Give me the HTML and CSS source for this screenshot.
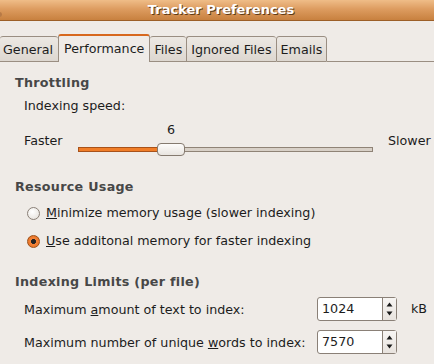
FILE: index.html
```html
<!DOCTYPE html>
<html lang="en">
<head>
<meta charset="utf-8"/>
<title>Tracker Preferences</title>
<link rel="stylesheet" href="styles.css">
</head>
<body>
<div class="window">
  <div class="titlebar">
    <span class="corner"></span>
    <span class="title">Tracker Preferences</span>
  </div>

  <div class="tabs">
    <div class="tab">General</div>
    <div class="tab active">Performance</div>
    <div class="tab">Files</div>
    <div class="tab">Ignored Files</div>
    <div class="tab">Emails</div>
    <div class="tab-fill"></div>
  </div>

  <div class="page">
    <h3 class="frame-title">Throttling</h3>
    <div class="frame">
      <p class="label">Indexing speed:</p>
      <div class="scale-row">
        <span class="scale-end faster">Faster</span>
        <div class="scale">
          <div class="scale-value" style="margin-left: 79px">6</div>
          <div class="trough">
            <div class="fill" style="width: 81px"></div>
            <div class="handle" style="left: 78px"><span class="grip"></span></div>
          </div>
        </div>
        <span class="scale-end slower">Slower</span>
      </div>
    </div>

    <h3 class="frame-title resource">Resource Usage</h3>
    <div class="frame">
      <label class="radio">
        <span class="radio-mark"></span>
        <span><u>M</u>inimize memory usage (slower indexing)</span>
      </label>
      <label class="radio">
        <span class="radio-mark checked"></span>
        <span><u>U</u>se additonal memory for faster indexing</span>
      </label>
    </div>

    <h3 class="frame-title limits">Indexing Limits (per file)</h3>
    <div class="frame limits-grid">
      <span class="limit-label">Maximum <u>a</u>mount of text to index:</span>
      <div class="spin">
        <span class="spin-text">1024</span>
        <span class="spin-btns">
          <svg width="13" height="22" viewBox="0 0 13 22"><path d="M3.5 8.5 L6.5 4.5 L9.5 8.5 Z" fill="#1a1a1a"/><path d="M3.5 13.5 L6.5 17.5 L9.5 13.5 Z" fill="#1a1a1a"/></svg>
        </span>
      </div>
      <span class="unit">kB</span>

      <span class="limit-label">Maximum number of unique <u>w</u>ords to index:</span>
      <div class="spin">
        <span class="spin-text">7570</span>
        <span class="spin-btns">
          <svg width="13" height="22" viewBox="0 0 13 22"><path d="M3.5 8.5 L6.5 4.5 L9.5 8.5 Z" fill="#1a1a1a"/><path d="M3.5 13.5 L6.5 17.5 L9.5 13.5 Z" fill="#1a1a1a"/></svg>
        </span>
      </div>
      <span class="unit"></span>
    </div>
  </div>
</div>
</body>
</html>
```

FILE: styles.css
```css
html, body {
    margin: 0;
    padding: 0;
}
body {
    background-color: #efebe7;
    color: #1c1c1c;
    font-family: "DejaVu Sans", sans-serif;
    font-size: 12.7px;
    line-height: 16px;
}
.window {
    width: 434px;
    height: 364px;
    overflow: hidden;
}

/* title bar */
.titlebar {
    height: 21px;
    box-sizing: border-box;
    background: linear-gradient(#efbd88, #dd9c60 45%, #c8813f);
    border-bottom: 1px solid #9c5f28;
    display: flex;
    align-items: center;
    justify-content: center;
    position: relative;
}
.title {
    color: #ffffff;
    font-weight: bold;
    font-size: 13px;
    text-shadow: 1px 1px 0 #5e3a17;
    margin-left: 8px;
}
.corner {
    position: absolute;
    left: -3px;
    top: 12px;
    width: 5px;
    height: 5px;
    border-radius: 50%;
    background: #b77a46;
}

/* notebook tabs */
.tabs {
    display: flex;
    align-items: flex-end;
    height: 28px;
    margin-top: 13px;
}
.tab {
    box-sizing: border-box;
    height: 26px;
    padding: 1px 4px 0 4px;
    border: 1px solid #9a8e82;
    border-right: none;
    border-radius: 3px 3px 0 0;
    background: linear-gradient(#ece8e3, #ddd7d0);
    display: flex;
    align-items: center;
}
.tab:first-child {
    border-left: none;
    padding-left: 3px;
    padding-right: 5px;
}
.tab:nth-child(5) {
    border-right: 1px solid #9a8e82;
}
.tab.active {
    height: 28px;
    background: #efebe7;
    border: 1px solid #9a8e82;
    border-top: 2px solid #d7681e;
    border-bottom: none;
    padding: 0 5px 1px 5px;
}
.tab.active + .tab {
    border-left: none;
}
.tab-fill {
    flex: 1;
    height: 1px;
    background: #9a8e82;
}

/* page content */
.page {
    padding-left: 15px;
}
.frame-title {
    margin: 13px 0 0 0;
    font-size: 12.7px;
    font-weight: bold;
    color: #474747;
    letter-spacing: 0.3px;
}
.frame {
    padding-left: 9px;
}
.label {
    margin: 7px 0 0 0;
}

/* scale */
.scale-row {
    display: flex;
    align-items: center;
    margin-top: 8px;
}
.scale-end {
    padding-top: 1px;
}
.faster {
    width: 54px;
}
.slower {
    margin-left: 15px;
}
.scale {
    width: 295px;
}
.scale-value {
    width: 28px;
    text-align: center;
}
.trough {
    position: relative;
    height: 5px;
    box-sizing: border-box;
    margin: 9px 0 6px 0;
    background: #d8d0c7;
    border: 1px solid #8f8376;
}
.fill {
    position: absolute;
    left: -1px;
    top: -1px;
    height: 5px;
    box-sizing: border-box;
    background: #f07d28;
    border: 1px solid #a8521a;
}
.handle {
    position: absolute;
    top: -5px;
    width: 28px;
    height: 13px;
    box-sizing: border-box;
    border: 1px solid #857a6f;
    border-radius: 4px;
    background: linear-gradient(#fdfcfb, #e9e5e0);
    display: flex;
    align-items: center;
    justify-content: center;
}
.grip {
    width: 8px;
    height: 7px;
    background-image: radial-gradient(circle, #cfc8c0 0.6px, transparent 0.7px);
    background-size: 2px 2px;
}

/* radio buttons */
.radio {
    display: flex;
    align-items: center;
    margin-top: 10px;
    padding-left: 3px;
}
.radio + .radio {
    margin-top: 12px;
}
.frame-title.resource {
    margin-top: 21px;
}
.radio-mark {
    width: 13px;
    height: 13px;
    box-sizing: border-box;
    border-radius: 50%;
    border: 1px solid #8a8077;
    background: radial-gradient(circle at 40% 35%, #ffffff, #e2ddd7);
    margin-right: 6px;
}
.radio-mark.checked {
    border-color: #9c4f17;
    background: radial-gradient(circle, #222 2.2px, #f3843a 2.7px, #e36b1c);
}

/* limits */
.frame-title.limits {
    margin-top: 25px;
}
.limits-grid {
    display: grid;
    grid-template-columns: 293px 80px auto;
    row-gap: 9px;
    align-items: center;
    margin-top: 7px;
}
.limits-grid .limit-label {
    padding-top: 1px;
}
.spin {
    height: 24px;
    box-sizing: border-box;
    border: 1px solid #8a8077;
    border-radius: 3px;
    background: #ffffff;
    display: flex;
}
.spin-text {
    flex: 1;
    padding-left: 4px;
    line-height: 22px;
}
.spin-btns {
    width: 13px;
    border-left: 1px solid #8a8077;
    background: linear-gradient(#f7f5f3, #e8e3de);
    display: flex;
}
.unit {
    margin-left: 14px;
}
```
